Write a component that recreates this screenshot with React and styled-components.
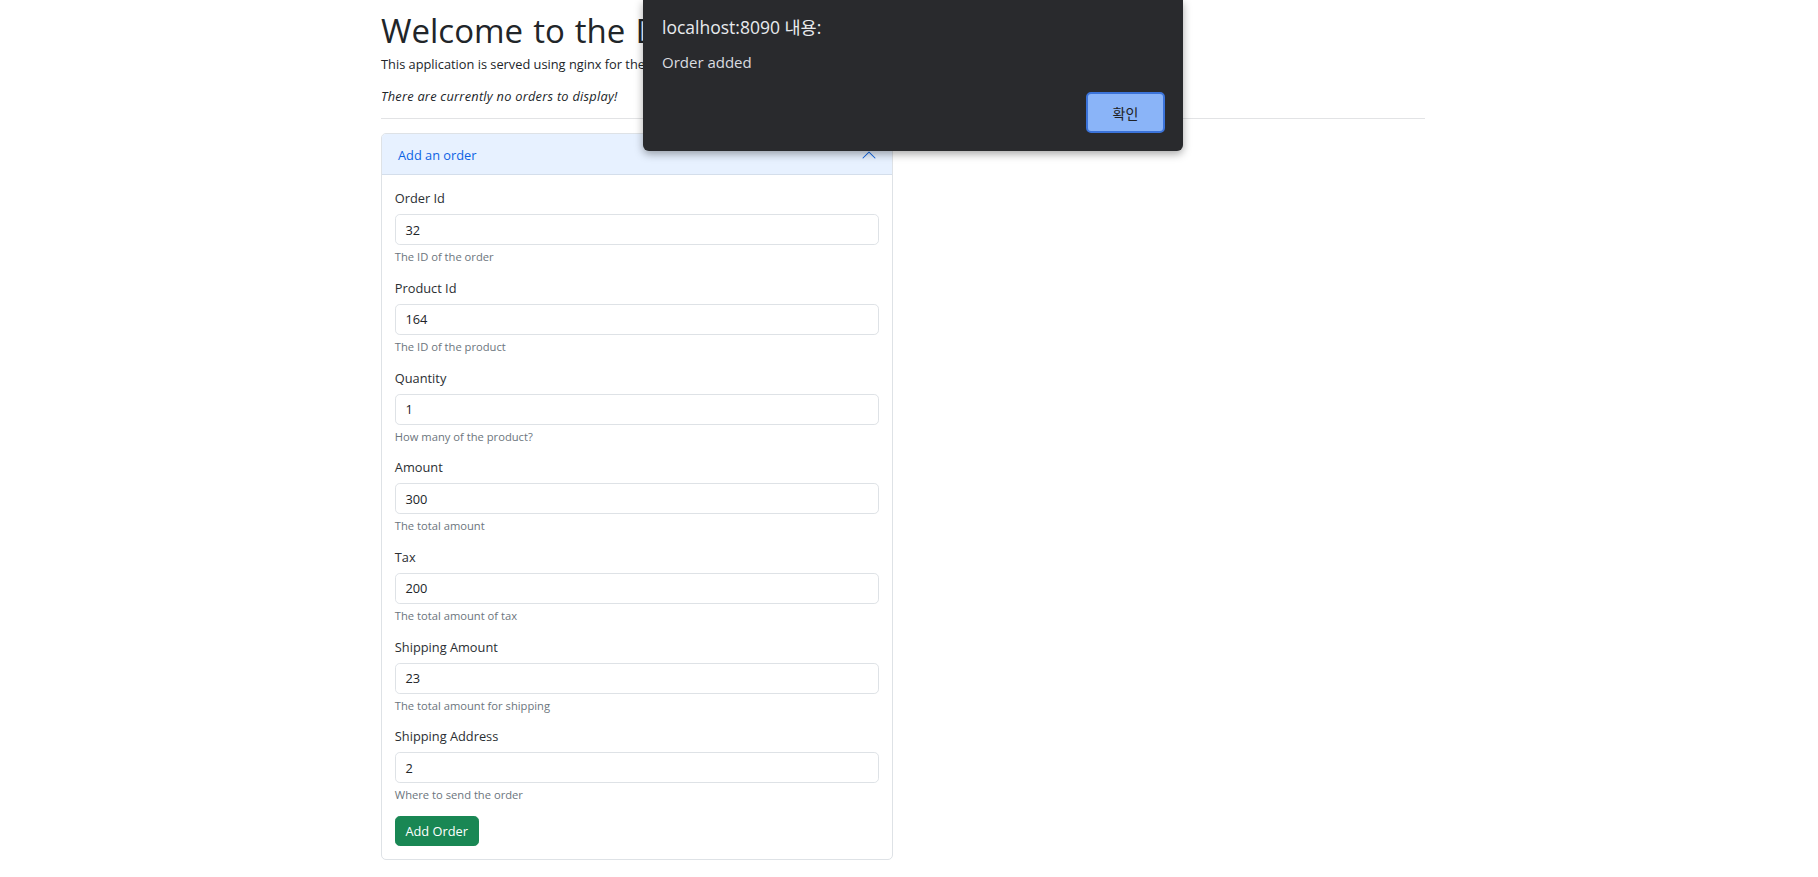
import React from "react";
import styled, { createGlobalStyle } from "styled-components";

const GlobalStyle = createGlobalStyle`
  html, body {
    margin: 0;
    padding: 0;
    background: #fff;
  }
  body {
    font-family: "Open Sans", "Noto Sans", sans-serif;
    color: #212529;
  }
  * {
    box-sizing: border-box;
  }
`;

const Page = styled.div`
  position: relative;
  min-height: 877px;
  overflow: hidden;
`;

const Container = styled.main`
  width: 1044px;
  margin-left: 381px;
  padding-top: 13px;
`;

const Title = styled.h1`
  margin: 0 0 6px;
  font-size: 33px;
  line-height: 36px;
  font-weight: 400;
  word-spacing: 1.5px;
  color: #212529;
  white-space: nowrap;
`;

const Lead = styled.p`
  margin: 0 0 ${(p) => (p.$italic ? "12px" : "13px")};
  font-size: 12.8px;
  line-height: 19.2px;
  font-style: ${(p) => (p.$italic ? "italic" : "normal")};
  letter-spacing: ${(p) => (p.$italic ? "0.25px" : "0")};
`;

const Divider = styled.hr`
  margin: 0 0 14px;
  border: 0;
  border-top: 1px solid #e2e3e5;
`;

const Card = styled.section`
  width: 512px;
  border: 1px solid #dee2e6;
  border-radius: 5px;
  overflow: hidden;
`;

const CardHeader = styled.div`
  display: flex;
  align-items: center;
  justify-content: space-between;
  height: 41px;
  padding: 0 15px 0 16px;
  background: #e7f1ff;
  color: #0c63e4;
  font-size: 12.8px;
  box-shadow: inset 0 -1px 0 rgba(0, 0, 0, 0.08);

  svg {
    width: 16px;
    height: 16px;
    transform: rotate(180deg);
  }
`;

const CardBody = styled.div`
  padding: 12.8px;
`;

const Field = styled.div`
  margin-bottom: 12.7px;
`;

const Label = styled.label`
  display: block;
  margin-bottom: 6px;
  font-size: 12.8px;
  line-height: 20px;
  color: #2b2f33;
`;

const Input = styled.input`
  display: block;
  width: 100%;
  height: 31px;
  padding: 0 9.6px;
  border: 1px solid #dee2e6;
  border-radius: 4.8px;
  font-family: inherit;
  font-size: 12.8px;
  color: #212529;
  background: #fff;
  outline: none;
`;

const Hint = styled.div`
  margin-top: 3px;
  font-size: 11.2px;
  line-height: 17px;
  color: #6c757d;
`;

const SubmitButton = styled.button`
  display: block;
  height: 30px;
  padding: 0 9.6px;
  border: 1px solid #198754;
  border-radius: 4.8px;
  background: #198754;
  color: #fff;
  font-family: inherit;
  font-size: 12.8px;
  cursor: pointer;
`;

const AlertDialog = styled.div`
  position: absolute;
  top: 0;
  left: 643px;
  width: 540px;
  height: 151px;
  display: flex;
  flex-direction: column;
  padding: 15px 18px 18px 19px;
  background: #292a2d;
  border-radius: 0 0 6px 6px;
  box-shadow: 0 3px 9px rgba(0, 0, 0, 0.35);
  font-family: "Open Sans", "Noto Sans CJK KR", sans-serif;
  color: #e8eaed;
`;

const AlertTitle = styled.div`
  font-size: 17.5px;
  line-height: 24px;
`;

const AlertMessage = styled.div`
  margin-top: 13px;
  font-size: 15px;
  line-height: 20px;
  color: #dadce0;
`;

const AlertActions = styled.div`
  margin-top: auto;
  display: flex;
  justify-content: flex-end;
`;

const ConfirmButton = styled.button`
  width: 79px;
  height: 41px;
  border: 2px solid #3b73d9;
  border-radius: 5px;
  background: #8ab4f8;
  color: #202124;
  font-family: "Noto Sans CJK KR", sans-serif;
  font-size: 14px;
  cursor: pointer;
`;

const fields = [
  { id: "orderId", label: "Order Id", value: "32", hint: "The ID of the order" },
  { id: "productId", label: "Product Id", value: "164", hint: "The ID of the product" },
  { id: "quantity", label: "Quantity", value: "1", hint: "How many of the product?" },
  { id: "amount", label: "Amount", value: "300", hint: "The total amount" },
  { id: "tax", label: "Tax", value: "200", hint: "The total amount of tax" },
  { id: "shippingAmount", label: "Shipping Amount", value: "23", hint: "The total amount for shipping" },
  { id: "shippingAddress", label: "Shipping Address", value: "2", hint: "Where to send the order" },
];

const Chevron = () => (
  <svg viewBox="0 0 16 16" fill="#0c63e4">
    <path d="M1.646 4.646a.5.5 0 0 1 .708 0L8 10.293l5.646-5.647a.5.5 0 0 1 .708.708l-6 6a.5.5 0 0 1-.708 0l-6-6a.5.5 0 0 1 0-.708z" />
  </svg>
);

export default function App() {
  return (
    <Page>
      <GlobalStyle />
      <Container>
        <Title>Welcome to the D</Title>
        <Lead>This application is served using nginx for the</Lead>
        <Lead $italic>There are currently no orders to display!</Lead>
        <Divider />
        <Card>
          <CardHeader>
            Add an order
            <Chevron />
          </CardHeader>
          <CardBody>
            {fields.map((f) => (
              <Field key={f.id}>
                <Label htmlFor={f.id}>{f.label}</Label>
                <Input id={f.id} defaultValue={f.value} />
                <Hint>{f.hint}</Hint>
              </Field>
            ))}
            <SubmitButton type="button">Add Order</SubmitButton>
          </CardBody>
        </Card>
      </Container>
      <AlertDialog role="alertdialog">
        <AlertTitle>localhost:8090 내용:</AlertTitle>
        <AlertMessage>Order added</AlertMessage>
        <AlertActions>
          <ConfirmButton type="button">확인</ConfirmButton>
        </AlertActions>
      </AlertDialog>
    </Page>
  );
}
